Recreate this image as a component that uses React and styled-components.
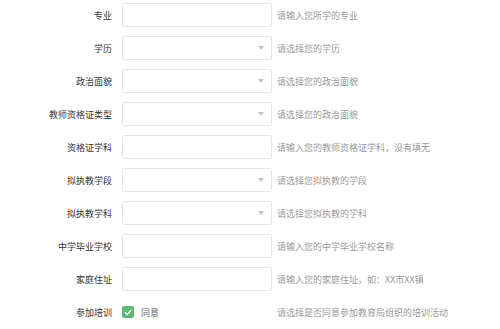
import React from 'react';
import styled, { createGlobalStyle } from 'styled-components';

const fields = [
  { label: '专业', type: 'input', hint: '请输入您所学的专业' },
  { label: '学历', type: 'select', hint: '请选择您的学历' },
  { label: '政治面貌', type: 'select', hint: '请选择您的政治面貌' },
  { label: '教师资格证类型', type: 'select', hint: '请选择您的政治面貌' },
  { label: '资格证学科', type: 'input', hint: '请输入您的教师资格证学科，没有填无' },
  { label: '拟执教学段', type: 'select', hint: '请选择您拟执教的学段' },
  { label: '拟执教学科', type: 'select', hint: '请选择您拟执教的学科' },
  { label: '中学毕业学校', type: 'input', hint: '请输入您的中学毕业学校名称' },
  { label: '家庭住址', type: 'input', hint: '请输入您的家庭住址，如：XX市XX镇' },
  { label: '参加培训', type: 'check', hint: '请选择是否同意参加教育局组织的培训活动' },
];

const App = () => {
  return (
    <>
      <GlobalStyle />
      <Form>
        {fields.map((f) => (
          <Row key={f.label}>
            <Label>{f.label}</Label>
            {f.type === 'check' ? (
              <CheckWrap>
                <CheckBox>
                  <svg width="8" height="7" viewBox="0 0 8 7">
                    <path d="M1 3.6 L3.1 5.6 L7 1.2" fill="none" stroke="#fff" strokeWidth="1.4" />
                  </svg>
                </CheckBox>
                <CheckText>同意</CheckText>
              </CheckWrap>
            ) : (
              <Field>
                {f.type === 'select' && <Arrow />}
              </Field>
            )}
            <Hint>{f.hint}</Hint>
          </Row>
        ))}
      </Form>
    </>
  );
};

const GlobalStyle = createGlobalStyle`
  body {
    margin: 0;
    background: #fff;
    font-family: "Noto Sans CJK SC", "Liberation Sans", sans-serif;
  }
`;

const Form = styled.div`
  display: flex;
  flex-direction: column;
  gap: 9px;
  padding-top: 3px;
`;

const Row = styled.div`
  display: grid;
  grid-template-columns: 112px 150px auto;
  column-gap: 0;
  align-items: center;
  height: 24px;
`;

const Label = styled.div`
  font-size: 9px;
  color: #333;
  text-align: right;
  padding-right: 0;
  white-space: nowrap;
`;

const Field = styled.div`
  margin-left: 10px;
  width: 150px;
  height: 24px;
  box-sizing: border-box;
  border: 1px solid #e6e6e6;
  border-radius: 2px;
  background: #fff;
  display: flex;
  align-items: center;
  justify-content: flex-end;
  padding-right: 7px;
`;

const Arrow = styled.span`
  width: 0;
  height: 0;
  border-left: 3.5px solid transparent;
  border-right: 3.5px solid transparent;
  border-top: 4px solid #c2c2c2;
`;

const CheckWrap = styled.div`
  margin-left: 10px;
  display: flex;
  align-items: center;
  gap: 7px;
`;

const CheckBox = styled.span`
  width: 12px;
  height: 12px;
  border-radius: 2px;
  background: #5fb878;
  display: flex;
  align-items: center;
  justify-content: center;
`;

const CheckText = styled.span`
  font-size: 9px;
  color: #666;
`;

const Hint = styled.div`
  margin-left: 15px;
  font-size: 9px;
  color: #999;
  white-space: nowrap;
`;

export default App;
